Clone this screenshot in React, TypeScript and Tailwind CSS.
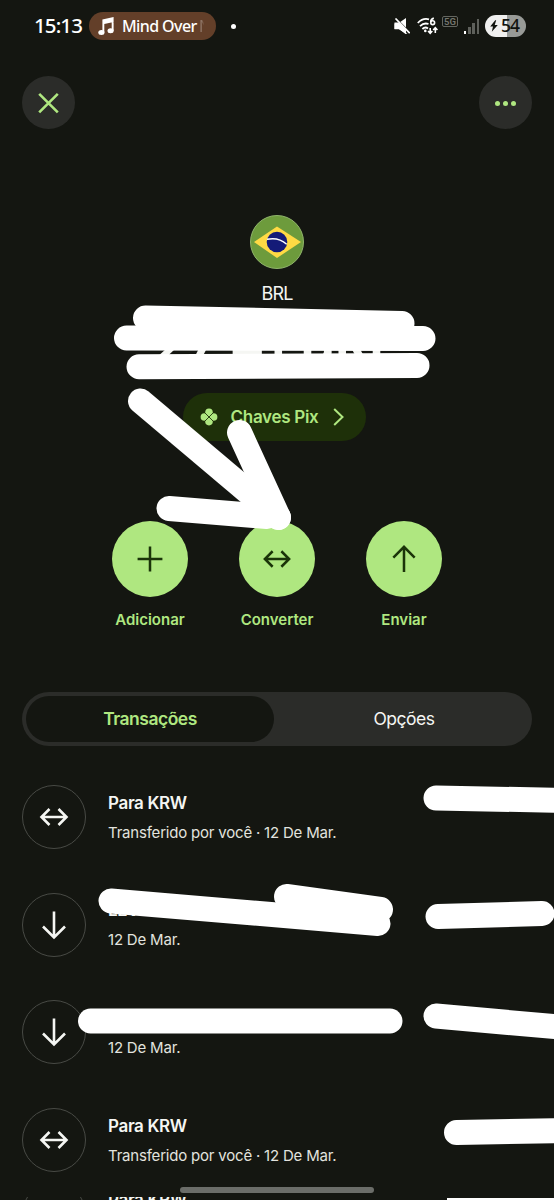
import React from "react";

type IconName = "convert" | "down" | "up" | "plus" | "close";

interface ITransaction {
  id: number;
  icon: IconName;
  title: string;
  subtitle: string;
}

const transactions: ITransaction[] = [
  { id: 1, icon: "convert", title: "Para KRW", subtitle: "Transferido por você · 12 De Mar." },
  { id: 2, icon: "down", title: "LEVI", subtitle: "12 De Mar." },
  { id: 3, icon: "down", title: "", subtitle: "12 De Mar." },
  { id: 4, icon: "convert", title: "Para KRW", subtitle: "Transferido por você · 12 De Mar." },
];

const iconPaths: Record<IconName, string> = {
  convert: "M1.5 14H26.5M9.5 6L1.5 14L9.5 22M18.5 6L26.5 14L18.5 22",
  down: "M14 0.5V26M3 15.5L14 26.5L25 15.5",
  up: "M14 27.5V2M3 12.5L14 1.5L25 12.5",
  plus: "M14 1.2V26.8M1.2 14H26.8",
  close: "M4.2 4.8L22.8 23.4M22.8 4.8L4.2 23.4",
};

const Icon: React.FC<{ name: IconName; className?: string }> = ({
  name,
  className,
}) => (
  <svg
    className={`h-7 w-7 overflow-visible ${className || ""}`}
    viewBox="0 0 28 28"
    fill="none"
    stroke="currentColor"
    strokeWidth={2.6}
  >
    <path d={iconPaths[name]} />
  </svg>
);

const StatusBar = () => (
  <header className="flex h-[52px] items-center pl-[34px] pr-[28px] font-['Noto_Sans',sans-serif] text-white">
    <span className="w-[55px] whitespace-nowrap text-[20.5px] font-medium leading-none tracking-[-0.9px] -mt-[2px]">
      15:13
    </span>
    <div className="flex h-7 w-[127px] items-center rounded-full bg-[#633f29] pl-[9px]">
      <svg className="h-[19px] w-4" viewBox="0 0 16 19" fill="currentColor">
        <path d="M4.4 2.5L15.6 0V5L6.3 7V15.5H4.4ZM13.7 3H15.6V13.8H13.7Z" />
        <ellipse cx="3.4" cy="15.6" rx="3.1" ry="2.5" />
        <ellipse cx="12.6" cy="13.8" rx="3.1" ry="2.5" />
      </svg>
      <span className="ml-2 w-[77px] whitespace-nowrap text-[16px] font-medium leading-none tracking-[-0.6px]">
        Mind Over
      </span>
      {/* next title letter fades out at the chip edge */}
      <span className="bg-[linear-gradient(90deg,#ffffff66_10%,transparent_45%)] bg-clip-text text-[16px] leading-none text-transparent">
        N
      </span>
    </div>
    <span className="ml-[15px] h-[5px] w-[5px] rounded-full bg-white" />
    <div className="ml-auto flex items-center">
      <svg className="h-4 w-4" viewBox="0 0 16 16" fill="currentColor">
        <path d="M0.5 5.5H4L12 0V10.5L14 12.7V15.5L11.5 16L5 11H0.5Z" />
        <path d="M0.5 0.5L16 16" stroke="#141611" strokeWidth="3.5" />
        <path d="M0.5 4.6H5L12 11.5V15.5L5 11.2H0.5Z" />
        <path d="M1.5 0.5L15.7 15.2" stroke="currentColor" strokeWidth="1.7" />
      </svg>
      <svg className="ml-[7px] h-[18px] w-[22px]" viewBox="0 0 22 18" fill="none" stroke="currentColor" strokeWidth="1.8">
        <path d="M0.8 6Q6 0.6 12 2.4M3 9.1Q7 5.3 11.5 7M5.4 12Q8.2 9.3 11 11.5" />
        <circle cx="8.3" cy="13.9" r="1.3" fill="currentColor" stroke="none" />
        <path d="M16.8 1.2Q13.8 2 13.8 5" />
        <circle cx="15.7" cy="5.7" r="1.9" strokeWidth="1.6" />
        <path d="M13.2 11V16M11.1 14L13.2 16.3L15.3 14M18.3 16V11M16.2 13L18.3 10.7L20.4 13" strokeWidth="1.6" />
      </svg>
      <span className="mb-[9px] ml-[3px] flex h-[11px] w-4 items-center justify-center rounded-[2px] border border-[#646660] font-['Roboto',sans-serif] text-[9.5px] font-semibold leading-none text-[#74766f]">
        5G
      </span>
      <div className="ml-[6px] flex h-[15px] items-end gap-[1.8px]">
        <span className="h-[3px] w-[2.4px] bg-white" />
        <span className="h-[7px] w-[2.4px] bg-[#5e605b]" />
        <span className="h-[11px] w-[2.4px] bg-[#5e605b]" />
        <span className="h-[15px] w-[2.4px] bg-[#5e605b]" />
      </div>
      <div className="ml-[6px] flex h-[22px] w-[41px] items-center rounded-full bg-[linear-gradient(90deg,#f0f0ef_54%,#989a97_54%)] pl-[5px] text-[#11130f]">
        <svg className="h-3 w-2" viewBox="0 0 8 12" fill="currentColor">
          <path d="M5.2 0.3L0.2 6.5H3L1.8 11.8L7.8 5H4.7L6.2 0.3Z" />
        </svg>
        <span className="-mt-px ml-[3px] text-[17.5px] font-medium leading-none tracking-[-1px]">
          54
        </span>
      </div>
    </div>
  </header>
);

const BrazilFlag = () => (
  <svg className="h-[54px] w-[54px]" viewBox="0 0 54 54">
    <circle cx="27" cy="27" r="26.5" fill="#6d9b3c" stroke="#90b46b" />
    <path d="M4 27L27 11.5L51 27L27 43Z" fill="#ffda44" />
    <circle cx="27" cy="27" r="10.3" fill="#141b78" />
    <path d="M17 24.3Q28.5 21.8 36.7 29.3" fill="none" stroke="#fff" strokeWidth="1.4" />
  </svg>
);

const PixIcon = () => (
  <svg className="h-[18px] w-[18px] overflow-visible" viewBox="0 0 18 18" fill="currentColor">
    <circle cx="9" cy="4.4" r="3.8" />
    <circle cx="9" cy="13.6" r="3.8" />
    <circle cx="4.4" cy="9" r="3.8" />
    <circle cx="13.6" cy="9" r="3.8" />
    <path d="M9 4.5L13.5 9L9 13.5L4.5 9Z" />
    <path d="M4.5 4.5L13.5 13.5M13.5 4.5L4.5 13.5" stroke="#1e3009" strokeWidth="0.9" />
  </svg>
);

const Action: React.FC<{ icon: IconName; label: string }> = ({
  icon,
  label,
}) => (
  <button className="flex w-[127px] flex-col items-center">
    <span className="flex h-19 w-19 items-center justify-center rounded-full bg-[#afe780] text-[#1b3409]">
      <Icon name={icon} className="scale-[0.97]" />
    </span>
    <span className="mt-[13px] text-[15px] font-semibold leading-5">{label}</span>
  </button>
);

const TransactionRow: React.FC<{ item: ITransaction }> = ({ item }) => (
  <li className="mb-[43.7px] flex h-16 items-center">
    <span className="flex h-16 w-16 shrink-0 items-center justify-center rounded-full border border-[#484a45]">
      <Icon name={item.icon} />
    </span>
    <div className="ml-[22px] pt-px">
      <h3 className="h-[30px] text-[17px] font-semibold leading-[30px] tracking-[-0.35px]">
        {item.title}
      </h3>
      <p className="h-[30px] text-[15px] leading-[30px] tracking-[-0.2px] text-[#e2e3df]">
        {item.subtitle}
      </p>
    </div>
  </li>
);

// marker strokes: [x1, y1, x2, y2]
const strokes = [
  [145.5, 318, 402, 323.5],
  [126.5, 338, 423, 338.5],
  [139, 366.7, 417, 365.5],
  [140.5, 401, 278.5, 517.5],
  [239.5, 432.5, 278.5, 517.5],
  [169, 508.5, 267, 516.5],
  [436, 798, 570, 800.5],
  [111, 901, 378, 923.5],
  [286.5, 896.5, 380.5, 909.5],
  [438, 916.5, 542, 913.5],
  [90.5, 1021, 390, 1021],
  [436, 1016, 570, 1028],
  [456.5, 1132.5, 570, 1130.5],
];

const Marker = () => (
  <svg
    className="pointer-events-none absolute inset-0 h-[1200px] w-[554px]"
    viewBox="0 0 554 1200"
    stroke="#fff"
    strokeWidth={25}
    strokeLinecap="round"
  >
    {strokes.map(([x1, y1, x2, y2]) => (
      <line key={`${x1}-${y1}`} x1={x1} y1={y1} x2={x2} y2={y2} />
    ))}
  </svg>
);

const App: React.FC = () => {
  return (
    <div className="relative flex h-[1200px] w-[554px] flex-col overflow-hidden bg-[#141611] font-['Inter',sans-serif] text-[#f5f6f3]">
      <StatusBar />

      <nav className="mt-6 flex shrink-0 justify-between px-[22px] text-[#afe780]">
        <button className="flex h-[53px] w-[53px] items-center justify-center rounded-full bg-[#2b2c29]">
          <Icon name="close" />
        </button>
        <button className="flex h-[53px] w-[53px] items-center justify-center gap-[3px] rounded-full bg-[#2b2c29] pt-[2px]">
          <span className="h-[5px] w-[5px] rounded-full bg-current" />
          <span className="h-[5px] w-[5px] rounded-full bg-current" />
          <span className="h-[5px] w-[5px] rounded-full bg-current" />
        </button>
      </nav>

      <section className="mt-[86px] flex shrink-0 flex-col items-center">
        <BrazilFlag />
        <p className="mt-3 text-[18px] leading-[25px] tracking-[-0.9px]">BRL</p>
        <h1 className="mt-[9px] h-[60px] whitespace-nowrap text-[50px] font-bold leading-[58px] tracking-[1.6px]">
          27,41 BRL
        </h1>
        <button className="mr-[6px] mt-[18px] flex h-12 w-[183px] items-center rounded-full bg-[#1e3009] pl-[17px] text-[#afe780]">
          <PixIcon />
          <span className="ml-[13px] w-[88px] whitespace-nowrap pt-[2px] text-[17px] font-semibold tracking-[-0.3px]">
            Chaves Pix
          </span>
          <svg className="ml-[14px] h-[18px] w-[11px]" viewBox="0 0 11 18" fill="none" stroke="currentColor" strokeWidth="2">
            <path d="M1.2 1L9.5 9L1.2 17" />
          </svg>
        </button>
      </section>

      <section className="mt-[80px] flex shrink-0 justify-center text-[#afe780]">
        <Action icon="plus" label="Adicionar" />
        <Action icon="convert" label="Converter" />
        <Action icon="up" label="Enviar" />
      </section>

      <div className="mx-[22px] mt-[62px] flex h-[54px] shrink-0 rounded-full bg-[#2b2c29] p-1 text-[17.5px]">
        <button className="w-[248px] rounded-full bg-[#141611] pt-px font-semibold tracking-[-0.5px] text-[#afe780]">
          Transações
        </button>
        <button className="flex-1 pl-[6px] pt-px tracking-[-0.5px]">Opções</button>
      </div>

      <ul className="mx-[22px] mt-[39px] h-[412px] shrink-0 overflow-hidden">
        {transactions.map((item) => (
          <TransactionRow key={item.id} item={item} />
        ))}
      </ul>

      <div className="flex h-[3px] shrink-0 overflow-hidden pl-[22px]">
        <div className="-mt-[15px] flex h-16 w-[425px]">
          <TransactionRow item={transactions[0]} />
        </div>
        <div className="mt-px h-[2px] flex-1 bg-white" />
      </div>

      <Marker />
      <div className="absolute bottom-[7px] left-[180px] h-[6px] w-[194px] rounded-full bg-[#6b6d69]" />
    </div>
  );
};

export default App;
